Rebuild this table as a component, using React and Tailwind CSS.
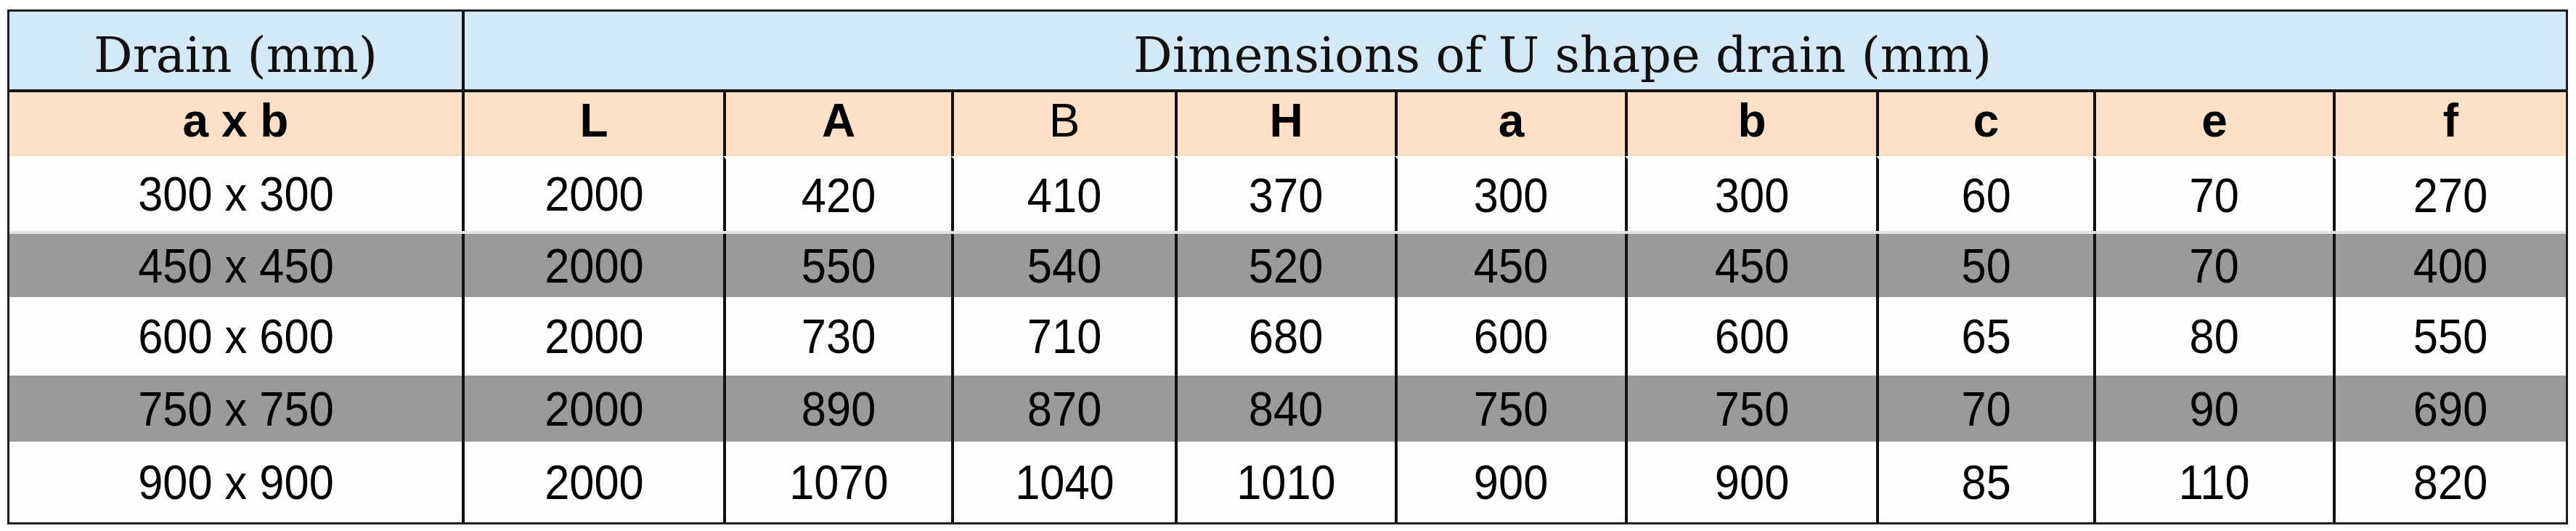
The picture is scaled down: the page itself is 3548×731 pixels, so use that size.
import React from "react";

const cols = [
  "L", "A", "B", "H", "a", "b", "c", "e", "f",
];

const rows = [
  { size: "300 x 300", v: ["2000", "420", "410", "370", "300", "300", "60", "70", "270"], gray: false, h: "h-[107px] border-b-4 border-[#e4e4e4]", first: true },
  { size: "450 x 450", v: ["2000", "550", "540", "520", "450", "450", "50", "70", "400"], gray: true, h: "h-[87px]" },
  { size: "600 x 600", v: ["2000", "730", "710", "680", "600", "600", "65", "80", "550"], gray: false, h: "h-[108px]" },
  { size: "750 x 750", v: ["2000", "890", "870", "840", "750", "750", "70", "90", "690"], gray: true, h: "h-[91px]" },
  { size: "900 x 900", v: ["2000", "1070", "1040", "1010", "900", "900", "85", "110", "820"], gray: false, h: "h-[111px]" },
];

const grid =
  "grid grid-cols-[623px_360px_314px_308px_303px_317px_346px_299px_330px_321px]";

function Num({ children }) {
  return (
    <span className="inline-block scale-x-[0.93] text-[66px] leading-none text-black font-['Liberation_Sans',Arial,sans-serif]">
      {children}
    </span>
  );
}

export default function App() {
  return (
    <div className="w-[3548px] h-[731px] bg-white pt-[13px] pl-[10px]">
      <div className="w-[3527px] border-[3px] border-[#1e1e1e]">
        {/* Header row 1 */}
        <div className={`${grid} h-[111px] bg-[#d4e9f7] border-b-4 border-[#141414]`}>
          <div className="flex items-center justify-center pt-[14px] text-[67px] leading-none text-[#111] font-['DejaVu_Serif',serif]">
            Drain (mm)
          </div>
          <div className="col-span-9 flex items-center justify-center border-l-4 border-[#141414] pl-[130px] pt-[14px] text-[67px] leading-none text-[#111] font-['DejaVu_Serif',serif]">
            Dimensions of U shape drain (mm)
          </div>
        </div>
        {/* Header row 2 */}
        <div className={`${grid} h-[88px] bg-[#fde0c5]`}>
          <div className="flex items-center justify-center pb-[10px] text-[64px] font-bold leading-none text-black font-['Liberation_Sans',Arial,sans-serif]">
            a x b
          </div>
          {cols.map((c) => (
            <div
              key={c}
              className={`flex items-center justify-center border-l-4 border-[#111] pb-[10px] text-[64px] leading-none text-black font-['Liberation_Sans',Arial,sans-serif] ${c === "B" ? "font-normal" : "font-bold"}`}
            >
              {c}
            </div>
          ))}
        </div>
        {/* Body */}
        {rows.map((r) => (
          <div
            key={r.size}
            className={`${grid} ${r.h} ${r.gray ? "bg-[#999a99]" : "bg-[#fdfdfd]"}`}
          >
            <div className="flex items-center justify-center">
              <Num>{r.size}</Num>
            </div>
            {r.v.map((v, i) => (
              <div
                key={i}
                className={`flex items-center justify-center border-l-4 ${i > 0 && r.first ? "border-[#111] border-t-4 border-t-[#fdfdfd] [border-left-color:#111]" : "border-[#111]"}`}
              >
                <Num>{v}</Num>
              </div>
            ))}
          </div>
        ))}
      </div>
    </div>
  );
}
